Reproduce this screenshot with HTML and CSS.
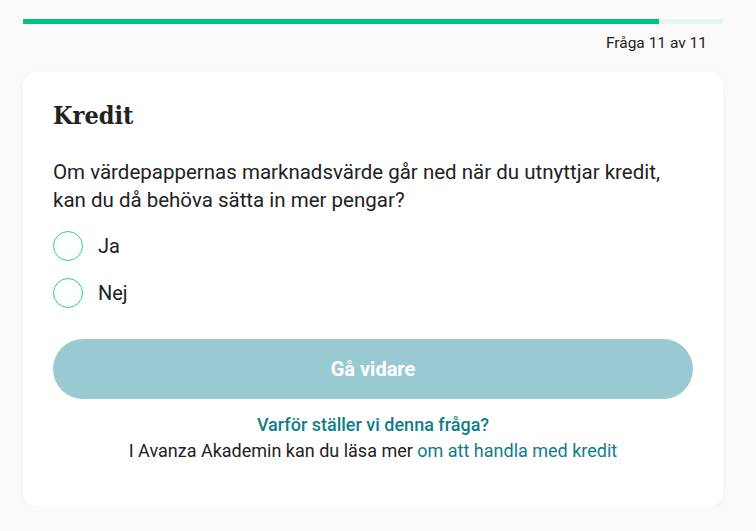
FILE: index.html
```html
<!DOCTYPE html>
<html lang="sv">
<head>
<meta charset="utf-8">
<link rel="stylesheet" href="styles.css">
</head>
<body>
<div class="page">
  <div class="progress"><div class="progress-fill" style="width:90.9%"></div></div>
  <div class="counter">Fråga 11 av 11</div>
  <div class="card">
    <h1 class="title">Kredit</h1>
    <p class="question">Om värdepappernas marknadsvärde går ned när du utnyttjar kredit, kan du då behöva sätta in mer pengar?</p>
    <div class="options">
      <label class="option"><span class="radio"></span><span class="label">Ja</span></label>
      <label class="option"><span class="radio"></span><span class="label">Nej</span></label>
    </div>
    <button class="next">Gå vidare</button>
    <div class="info">
      <a class="why">Varför ställer vi denna fråga?</a>
      <div class="more">I Avanza Akademin kan du läsa mer <a class="link">om att handla med kredit</a></div>
    </div>
  </div>
</div>
</body>
</html>
```
FILE: styles.css
```css
html, body { margin: 0; padding: 0; }
body {
  background: #fafafa;
  font-family: Roboto, "Noto Sans", sans-serif;
  color: #222;
}
.page {
  width: 700px;
  margin: 0 0 0 23px;
  padding-top: 19px;
}
.progress {
  height: 5px;
  background: #e3f7ef;
}
.progress-fill {
  height: 100%;
  background: #00c281;
}
.counter {
  text-align: right;
  font-size: 15.5px;
  line-height: 20px;
  margin-top: 9px;
  padding-right: 16px;
  color: #222;
}
.card {
  margin-top: 19px;
  background: #fff;
  border-radius: 14px;
  box-shadow: 0 2px 10px rgba(0,0,0,0.04);
  padding: 28px 30px 42px;
}
.title {
  margin: 0;
  font-family: "DejaVu Serif Condensed", "DejaVu Serif", serif;
  font-stretch: condensed;
  font-weight: bold;
  font-size: 25px;
  line-height: 32px;
  color: #222;
}
.question {
  margin: 26px 0 0;
  font-size: 20.5px;
  line-height: 28px;
  color: #222;
}
.options {
  margin-top: 17px;
  display: flex;
  flex-direction: column;
  gap: 17px;
}
.option {
  display: flex;
  align-items: center;
  gap: 15px;
  height: 30px;
}
.radio {
  width: 28px;
  height: 28px;
  border: 1px solid #2ccf98;
  border-radius: 50%;
  box-sizing: content-box;
}
.label {
  font-size: 20px;
  color: #222;
}
.next {
  display: block;
  width: 100%;
  height: 60px;
  margin-top: 31px;
  border: none;
  border-radius: 30px;
  background: #99cad1;
  color: #fff;
  font-family: Roboto, sans-serif;
  font-weight: bold;
  font-size: 20px;
}
.info {
  margin-top: 13px;
  text-align: center;
  font-size: 18px;
  line-height: 26px;
}
.why {
  display: block;
  color: #0f7d87;
  font-weight: 500;
}
.more { color: #222; }
.link { color: #0f7d87; }
```
